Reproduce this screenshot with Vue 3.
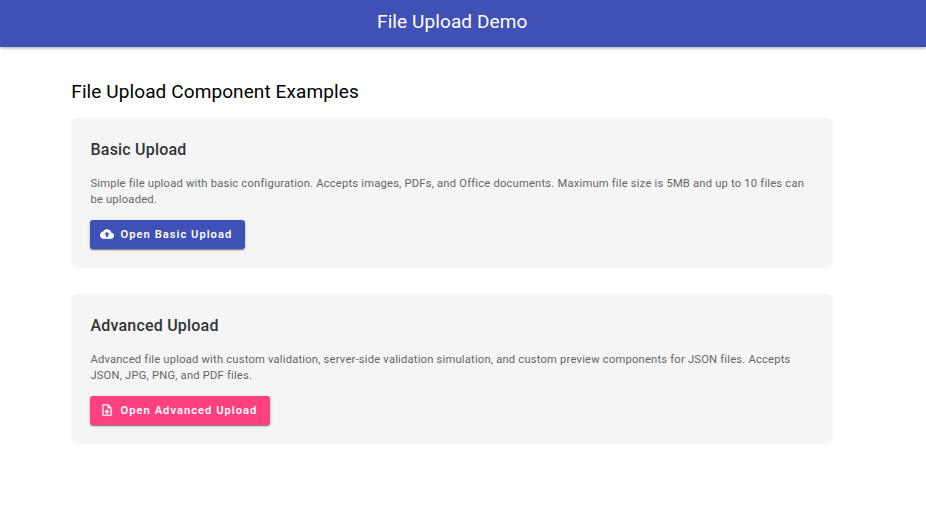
<script setup>
const cards = [
  { title: 'Basic Upload', text: 'Simple file upload with basic configuration. Accepts images, PDFs, and Office documents. Maximum file size is 5MB and up to 10 files can be uploaded.', button: 'Open Basic Upload', kind: 'primary', icon: 'M19.35 10.04C18.67 6.59 15.64 4 12 4 9.11 4 6.6 5.64 5.35 8.04 2.34 8.36 0 10.91 0 14c0 3.31 2.69 6 6 6h13c2.76 0 5-2.24 5-5 0-2.64-2.05-4.78-4.65-4.96zM14 13v4h-4v-4H7l5-5 5 5h-3z' },
  { title: 'Advanced Upload', text: 'Advanced file upload with custom validation, server-side validation simulation, and custom preview components for JSON files. Accepts JSON, JPG, PNG, and PDF files.', button: 'Open Advanced Upload', kind: 'accent', icon: 'M14 2H6c-1.1 0-1.99.9-1.99 2L4 20c0 1.1.89 2 1.99 2H18c1.1 0 2-.9 2-2V8l-6-6zm4 18H6V4h7v5h5v11zM8 15.01l1.41 1.41L11 14.84V19h2v-4.16l1.59 1.59L16 15.01 12.01 11z' }
]
</script>

<template>
  <div class="page">
    <header class="toolbar">File Upload Demo</header>
    <main class="content">
      <h1>File Upload Component Examples</h1>
      <section v-for="card in cards" :key="card.title" class="card">
        <h2>{{ card.title }}</h2>
        <p>{{ card.text }}</p>
        <button type="button" :class="card.kind">
          <svg viewBox="0 0 24 24" aria-hidden="true"><path :d="card.icon" /></svg>
          <span>{{ card.button }}</span>
        </button>
      </section>
    </main>
  </div>
</template>

<style>
body { margin: 0; background: #fff; }
</style>

<style scoped>
.page { min-height: 530px; font-family: Roboto, sans-serif; color: #000; }
.toolbar { display: flex; justify-content: center; align-items: center; box-sizing: border-box; height: 47px; padding: 0 21.5px 4px 0; background: #3f51b5; color: #fff; font-size: 19px; font-weight: 430; letter-spacing: .1px; box-shadow: 0 1px 3px rgba(0, 0, 0, .35); }
.content { width: 762px; margin-left: 71px; padding-top: 32px; }
h1 { margin: 0 0 14px; padding-left: .3px; font-size: 19px; line-height: 25px; font-weight: 400; letter-spacing: .1px; }
.card { box-sizing: border-box; height: 150px; padding: 20px 19px 0; margin-bottom: 26px; border-radius: 7px; background: #f5f5f5; }
h2 { margin: 0 0 15px; padding-left: .5px; font-size: 16px; line-height: 23px; font-weight: 500; color: #333; letter-spacing: .2px; }
p { margin: 0 0 12px; padding-left: .4px; font-size: 11.2px; line-height: 16px; color: #666; letter-spacing: .204px; }
button { display: flex; align-items: center; gap: 6.6px; height: 29px; padding: 0 12px 0 10px; border: 0; border-radius: 3px; color: #fff; font: 600 11.2px Roboto, sans-serif; letter-spacing: 1px; box-shadow: 0 2px 1px -1px rgba(0,0,0,.25), 0 1px 1px rgba(0,0,0,.18), 0 1px 3px rgba(0,0,0,.25); }
.primary { width: 155px; background: #3f51b5; }
.accent { width: 180px; background: #ff4081; }
span { white-space: nowrap; }
svg { flex: none; width: 14px; height: 14px; margin-bottom: 1px; fill: currentColor; stroke: currentColor; stroke-width: .35; }
</style>
